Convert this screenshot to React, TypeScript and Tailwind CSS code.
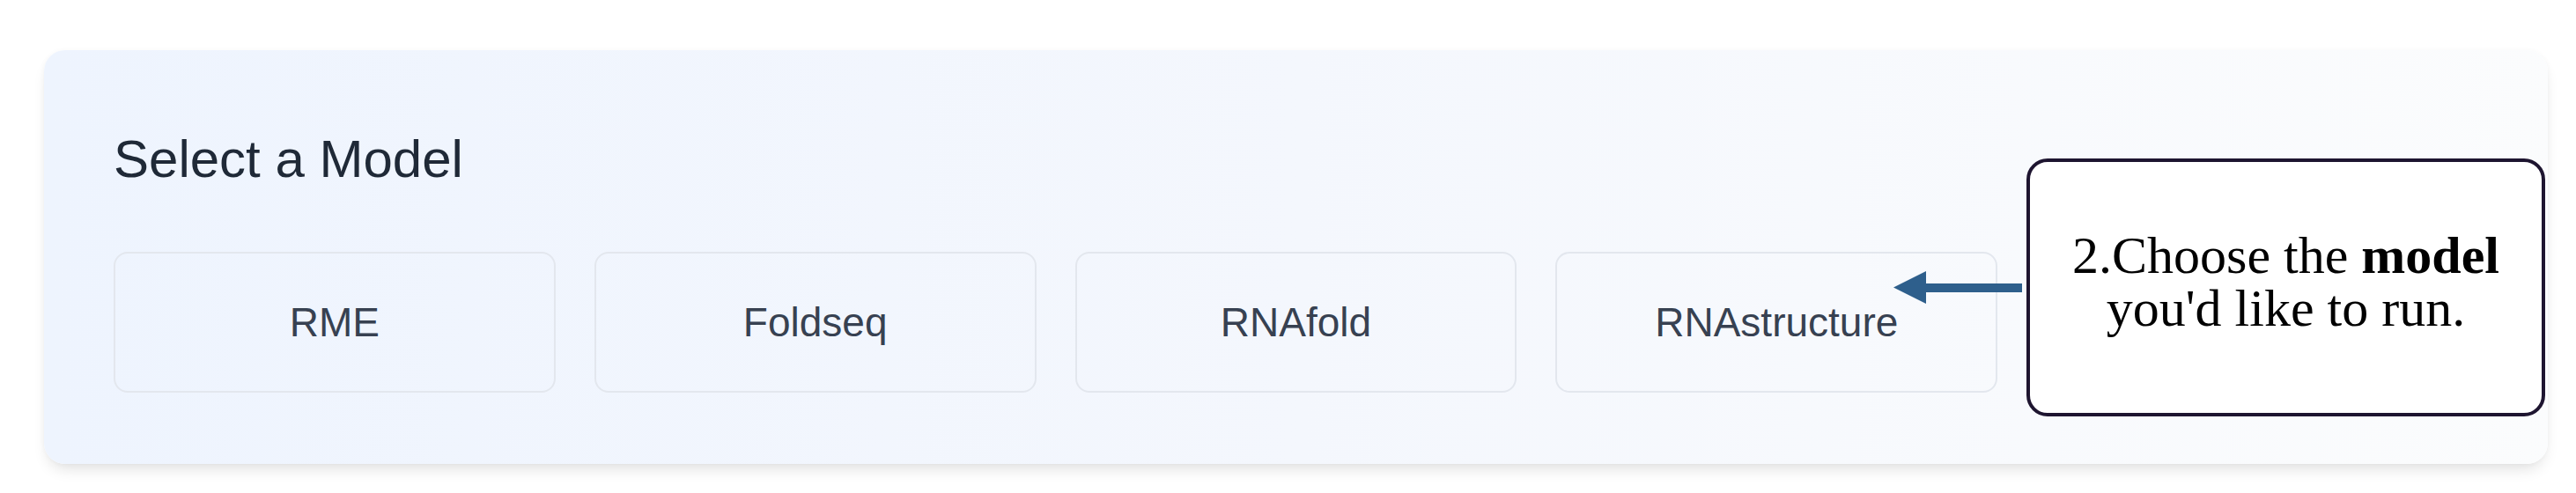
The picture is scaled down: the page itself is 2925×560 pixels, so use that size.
const models = ["RME", "Foldseq", "RNAfold", "RNAstructure"];

const ModelCard = ({ name }: { name: string }) => (
  <button className="h-[160px] rounded-[16px] border-2 border-[#e3e7ee] bg-transparent text-[46px] text-[#374151]">
    {name}
  </button>
);

export default function App() {
  return (
    <div className="w-[2925px] h-[560px] bg-white pl-[50px] pr-[32px] pt-[57px] font-['Liberation_Sans',Arial,sans-serif]">
      <div className="relative h-[470px] rounded-[24px] bg-gradient-to-r from-[#eef4fe] via-[#f4f7fd] to-[#fbfcfd] px-[79px] pt-[89px] shadow-[0_10px_18px_-6px_rgba(0,0,0,0.14),0_0_6px_rgba(0,0,0,0.03)]">
        {/* HEADING */}
        <h2 className="text-[60px] leading-[69px] text-[#1f2937]">
          Select a Model
        </h2>

        {/* MODEL GRID */}
        <div className="mt-[71px] grid grid-cols-5 gap-[44px]">
          {models.map((m) => (
            <ModelCard key={m} name={m} />
          ))}
        </div>

        {/* ANNOTATION ARROW */}
        <svg
          className="absolute left-[2100px] top-[251px]"
          width="148"
          height="38"
          viewBox="0 0 148 38"
        >
          <rect x="36" y="14" width="110" height="10" fill="#2e5f8c" />
          <polygon points="0,18.5 37,0 37,37" fill="#2e5f8c" />
        </svg>

        {/* ANNOTATION CALLOUT */}
        <div className="absolute left-[2251px] top-[123px] flex h-[293px] w-[589px] items-center justify-center rounded-[24px] border-4 border-[#1e1530] bg-white pb-[14px] text-center font-['Liberation_Serif','Times_New_Roman',serif] text-[60px] leading-[60px] text-black">
          <p>
            2.Choose the <b>model</b>
            <br />
            you'd like to run.
          </p>
        </div>
      </div>
    </div>
  );
}
